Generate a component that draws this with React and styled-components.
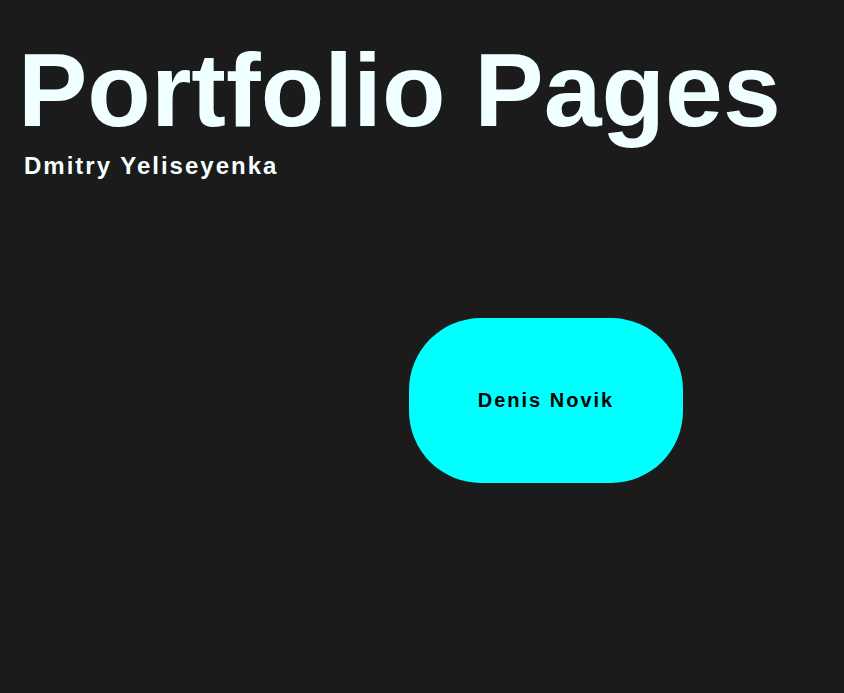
import React from "react";
import styled, { createGlobalStyle } from "styled-components";

const GlobalStyle = createGlobalStyle`
  html, body {
    margin: 0;
    padding: 0;
    background: #1b1b1b;
  }
  body {
    font-family: "Liberation Sans", Arial, sans-serif;
    min-height: 693px;
  }
`;

const Page = styled.div`
  min-height: 693px;
  background: #1b1b1b;
  display: flex;
  flex-direction: column;
`;

const Header = styled.header`
  display: flex;
  flex-direction: column;
  padding: 30px 0 0 14px;
`;

const Title = styled.h1`
  margin: 0 0 0 4px;
  font-size: 104px;
  line-height: 120px;
  font-weight: 700;
  color: #f0ffff;
`;

const Subtitle = styled.h2`
  margin: 2px 0 0 10px;
  font-size: 24px;
  line-height: 28px;
  font-weight: 700;
  letter-spacing: 2px;
  color: #f5ffff;
`;

const Stage = styled.main`
  display: flex;
  padding: 138px 0 0 409px;
`;

const PillButton = styled.button`
  width: 274px;
  height: 165px;
  border: none;
  border-radius: 72px;
  background: #00ffff;
  color: #000;
  font-family: "Liberation Sans", Arial, sans-serif;
  font-size: 20px;
  font-weight: 700;
  letter-spacing: 2px;
  cursor: pointer;
  display: flex;
  align-items: center;
  justify-content: center;
  padding: 0;
`;

export default function App() {
  return (
    <>
      <GlobalStyle />
      <Page>
        <Header>
          <Title>Portfolio Pages</Title>
          <Subtitle>Dmitry Yeliseyenka</Subtitle>
        </Header>
        <Stage>
          <PillButton>Denis Novik</PillButton>
        </Stage>
      </Page>
    </>
  );
}
